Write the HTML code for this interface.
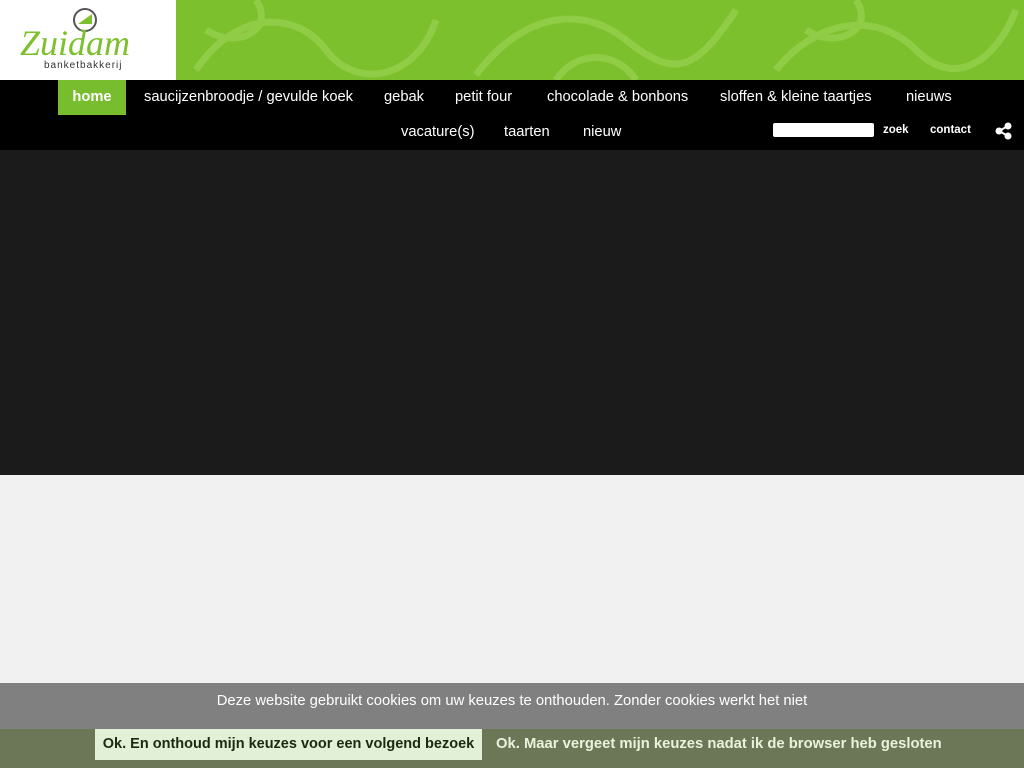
<!DOCTYPE html>
<html><head><meta charset="utf-8"><style>
*{margin:0;padding:0;box-sizing:border-box}
body{width:1024px;height:768px;overflow:hidden;background:#f1f1f1;font-family:"Liberation Sans","DejaVu Sans",sans-serif;position:relative}
.hdr{position:absolute;left:0;top:0;width:1024px;height:80px;background:#7cc02e}
.hdr svg{position:absolute;left:176px;top:0}
.logo{position:absolute;left:0;top:0;width:176px;height:80px;background:#fff}
.nav{position:absolute;left:0;top:80px;width:1024px;height:70px;background:#000}
.nav a{position:absolute;color:#fff;font-size:14.7px;text-decoration:none;line-height:35px;white-space:nowrap}
.home{background:#78bd2e;font-weight:bold;padding:0 14px;width:68px;text-align:center}
.dark{position:absolute;left:0;top:150px;width:1024px;height:325px;background:#1b1b1b}
.ck1{position:absolute;left:0;top:683px;width:1024px;height:46px;background:#808080;color:#fff;font-size:14.8px;text-align:center;line-height:36px}
.ck2{position:absolute;left:0;top:729px;width:1024px;height:39px;background:#6b7757}
.b1{position:absolute;left:95px;top:0;width:387px;height:31px;background:#e3f0d8;color:#1a2a10;font-weight:bold;font-size:14.5px;line-height:31px;text-align:center;white-space:nowrap}
.b2{position:absolute;left:496px;top:0;color:#e8f3dc;font-weight:bold;font-size:14.8px;line-height:31px;white-space:nowrap}
</style></head><body>
<div class="hdr"><svg width="848" height="80"><g fill="none" stroke="#95cf4c" stroke-width="7" opacity=".8">
<path d="M20 70 C60 10 120 10 150 50 S240 80 260 20"/><path d="M300 75 C340 20 400 0 450 40 S520 70 560 10"/><path d="M600 70 C640 20 700 10 740 50 S820 60 840 10"/>
<path d="M80 0 C100 30 60 50 30 30"/><path d="M380 80 C400 50 440 50 460 80"/><path d="M680 0 C700 30 660 50 630 30"/></g></svg></div>
<div class="logo"><svg width="176" height="80">
<circle cx="85" cy="20" r="11" fill="none" stroke="#555" stroke-width="2"/><path d="M78 24 L92 14 L92 24 Z" fill="#7cc02e"/>
<text x="20" y="55" font-family="Liberation Serif,serif" font-style="italic" font-size="36" fill="#7cc02e">Zuidam</text>
<text x="44" y="68" font-size="10" fill="#333" letter-spacing="1">banketbakkerij</text></svg></div>
<div class="nav">
<a class="home" style="left:58px;top:0">home</a>
<a style="left:144px;top:0">saucijzenbroodje / gevulde koek</a>
<a style="left:384px;top:0">gebak</a>
<a style="left:455px;top:0">petit four</a>
<a style="left:547px;top:0">chocolade &amp; bonbons</a>
<a style="left:720px;top:0">sloffen &amp; kleine taartjes</a>
<a style="left:906px;top:0">nieuws</a>
<a style="left:401px;top:35px">vacature(s)</a>
<a style="left:504px;top:35px">taarten</a>
<a style="left:583px;top:35px">nieuw</a>
<div style="position:absolute;left:773px;top:43px;width:101px;height:14px;background:#fff;border-radius:2px"></div>
<a style="left:883px;top:33px;font-size:11.5px;font-weight:bold">zoek</a>
<a style="left:930px;top:33px;font-size:11.5px;font-weight:bold">contact</a>
<svg style="position:absolute;left:995px;top:42px" width="18" height="18"><g fill="#fff"><circle cx="4" cy="9" r="3.5"/><circle cx="13" cy="4" r="3.5"/><circle cx="13" cy="14" r="3.5"/></g><path d="M4 9 L13 4 M4 9 L13 14" stroke="#fff" stroke-width="2"/></svg>
</div>
<div class="dark"></div>
<div class="ck1">Deze website gebruikt cookies om uw keuzes te onthouden. Zonder cookies werkt het niet</div>
<div class="ck2"><div class="b1">Ok. En onthoud mijn keuzes voor een volgend bezoek</div><div class="b2">Ok. Maar vergeet mijn keuzes nadat ik de browser heb gesloten</div></div>
</body></html>
